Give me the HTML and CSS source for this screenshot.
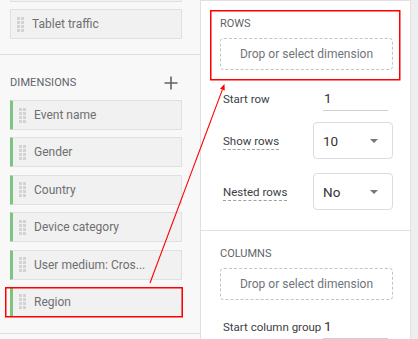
FILE: index.html
```html
<!DOCTYPE html>
<html>
<head>
<meta charset="utf-8">
<link rel="stylesheet" href="styles.css">
</head>
<body>
<div class="app">
  <aside class="left">
    <section class="sec sec-metrics">
      <div class="chip chip-clipped"></div>
      <div class="chip">
        <svg class="handle" width="7" height="15" viewBox="0 0 7 15"><rect x="0" y="0" width="3" height="3"/><rect x="4" y="0" width="3" height="3"/><rect x="0" y="4" width="3" height="3"/><rect x="4" y="4" width="3" height="3"/><rect x="0" y="8" width="3" height="3"/><rect x="4" y="8" width="3" height="3"/><rect x="0" y="12" width="3" height="3"/><rect x="4" y="12" width="3" height="3"/></svg>
        <span class="chip-text">Tablet traffic</span>
      </div>
    </section>
    <section class="sec sec-dims">
      <div class="sec-head">
        <span class="sec-title">Dimensions</span>
        <svg class="plus" width="14" height="14" viewBox="0 0 14 14"><path d="M7 0.5V13.5M0.5 7H13.5"/></svg>
      </div>
      <div class="chip-list">
        <div class="chip dim">
          <svg class="handle" width="7" height="15" viewBox="0 0 7 15"><rect x="0" y="0" width="3" height="3"/><rect x="4" y="0" width="3" height="3"/><rect x="0" y="4" width="3" height="3"/><rect x="4" y="4" width="3" height="3"/><rect x="0" y="8" width="3" height="3"/><rect x="4" y="8" width="3" height="3"/><rect x="0" y="12" width="3" height="3"/><rect x="4" y="12" width="3" height="3"/></svg>
          <span class="chip-text">Event name</span>
        </div>
        <div class="chip dim">
          <svg class="handle" width="7" height="15" viewBox="0 0 7 15"><rect x="0" y="0" width="3" height="3"/><rect x="4" y="0" width="3" height="3"/><rect x="0" y="4" width="3" height="3"/><rect x="4" y="4" width="3" height="3"/><rect x="0" y="8" width="3" height="3"/><rect x="4" y="8" width="3" height="3"/><rect x="0" y="12" width="3" height="3"/><rect x="4" y="12" width="3" height="3"/></svg>
          <span class="chip-text">Gender</span>
        </div>
        <div class="chip dim">
          <svg class="handle" width="7" height="15" viewBox="0 0 7 15"><rect x="0" y="0" width="3" height="3"/><rect x="4" y="0" width="3" height="3"/><rect x="0" y="4" width="3" height="3"/><rect x="4" y="4" width="3" height="3"/><rect x="0" y="8" width="3" height="3"/><rect x="4" y="8" width="3" height="3"/><rect x="0" y="12" width="3" height="3"/><rect x="4" y="12" width="3" height="3"/></svg>
          <span class="chip-text">Country</span>
        </div>
        <div class="chip dim">
          <svg class="handle" width="7" height="15" viewBox="0 0 7 15"><rect x="0" y="0" width="3" height="3"/><rect x="4" y="0" width="3" height="3"/><rect x="0" y="4" width="3" height="3"/><rect x="4" y="4" width="3" height="3"/><rect x="0" y="8" width="3" height="3"/><rect x="4" y="8" width="3" height="3"/><rect x="0" y="12" width="3" height="3"/><rect x="4" y="12" width="3" height="3"/></svg>
          <span class="chip-text">Device category</span>
        </div>
        <div class="chip dim">
          <svg class="handle" width="7" height="15" viewBox="0 0 7 15"><rect x="0" y="0" width="3" height="3"/><rect x="4" y="0" width="3" height="3"/><rect x="0" y="4" width="3" height="3"/><rect x="4" y="4" width="3" height="3"/><rect x="0" y="8" width="3" height="3"/><rect x="4" y="8" width="3" height="3"/><rect x="0" y="12" width="3" height="3"/><rect x="4" y="12" width="3" height="3"/></svg>
          <span class="chip-text">User medium: Cros...</span>
        </div>
        <div class="chip dim">
          <svg class="handle" width="7" height="15" viewBox="0 0 7 15"><rect x="0" y="0" width="3" height="3"/><rect x="4" y="0" width="3" height="3"/><rect x="0" y="4" width="3" height="3"/><rect x="4" y="4" width="3" height="3"/><rect x="0" y="8" width="3" height="3"/><rect x="4" y="8" width="3" height="3"/><rect x="0" y="12" width="3" height="3"/><rect x="4" y="12" width="3" height="3"/></svg>
          <span class="chip-text">Region</span>
        </div>
      </div>
    </section>
  </aside>

  <main class="right">
    <section class="panel panel-rows">
      <div class="panel-title">Rows</div>
      <div class="dropzone">Drop or select dimension</div>
      <div class="form">
        <div class="field">
          <span class="field-label">Start row</span>
          <span class="num-input">1</span>
        </div>
        <div class="field field-select">
          <span class="field-label"><span class="dashed">Show rows</span></span>
          <span class="select"><span class="select-value">10</span><span class="caret"></span></span>
        </div>
        <div class="field field-select">
          <span class="field-label"><span class="dashed">Nested rows</span></span>
          <span class="select"><span class="select-value">No</span><span class="caret"></span></span>
        </div>
      </div>
    </section>
    <section class="panel panel-cols">
      <div class="panel-title">Columns</div>
      <div class="dropzone">Drop or select dimension</div>
      <div class="form">
        <div class="field">
          <span class="field-label">Start column group</span>
          <span class="num-input">1</span>
        </div>
      </div>
    </section>
  </main>

  <div class="scrollbar"></div>

  <svg class="annot" width="418" height="339" viewBox="0 0 418 339">
    <rect x="210.75" y="10.75" width="189" height="69" />
    <rect x="5.75" y="287.75" width="176.5" height="29" />
    <line x1="150" y1="283" x2="222.4" y2="89.6" />
    <polygon points="224.5,84 224.75,90.49 220.07,88.75" />
  </svg>
</div>
</body>
</html>
```

FILE: styles.css
```css
* {
  box-sizing: border-box;
}

body {
  margin: 0;
  font-family: Roboto, "Liberation Sans", Arial, sans-serif;
  background: #ffffff;
}

.app {
  position: relative;
  display: flex;
  width: 418px;
  height: 339px;
  overflow: hidden;
}

/* ---------- left column ---------- */
.left {
  flex: none;
  width: 201px;
  background: #f8f8f8;
  border-right: 1px solid #e0e0e0;
}

.sec {
  padding: 0 18px 15px 10px;
  border-bottom: 1px solid #e0e0e0;
}

.sec-metrics {
  display: flex;
  flex-direction: column;
  gap: 7px;
}

.sec-dims {
  padding-top: 20px;
  padding-bottom: 16px;
}

.sec-head {
  display: flex;
  align-items: center;
  justify-content: space-between;
  height: 16px;
  margin-bottom: 9px;
  padding-right: 4px;
}

.sec-title {
  font-size: 11px;
  line-height: 16px;
  text-transform: uppercase;
  color: #5f6368;
  letter-spacing: 0.1px;
}

.plus path {
  stroke: #5f6368;
  stroke-width: 1.6;
  fill: none;
}

.chip-list {
  display: flex;
  flex-direction: column;
  gap: 7.4px;
}

.chip {
  display: flex;
  align-items: center;
  gap: 8px;
  height: 30px;
  padding-left: 6px;
  background: #f1f1f1;
  border: 1px solid #e0e0e0;
  border-radius: 1px;
}

.chip-clipped {
  height: 2px;
  border-top: none;
}

.chip.dim {
  border-left: 3px solid #7cc47f;
}

.handle {
  flex: none;
  fill: #d3d3d3;
}

.chip-text {
  font-size: 12px;
  color: #6f6f6f;
  white-space: nowrap;
}

/* ---------- right column ---------- */
.right {
  flex: none;
  width: 209px;
  background: #ffffff;
}

.panel {
  padding: 16px 17px 20px 19px;
  border-bottom: 1px solid #e0e0e0;
}

.panel-rows {
  border-top: 1px solid #e0e0e0;
}

.panel-title {
  font-size: 11px;
  line-height: 14px;
  text-transform: uppercase;
  color: #5f6368;
  margin-bottom: 7px;
}

.dropzone {
  display: flex;
  align-items: center;
  justify-content: center;
  height: 32px;
  border: 1px dashed #c4c4c4;
  border-radius: 4px;
  font-size: 12px;
  color: #70757a;
}

.form {
  display: flex;
  flex-direction: column;
  padding-left: 3px;
  margin-top: 16px;
}

.field {
  display: flex;
  align-items: center;
  height: 25px;
}

.field-label {
  flex: none;
  width: 100px;
  font-size: 11.5px;
  color: #3c4043;
  white-space: nowrap;
}

.num-input {
  width: 65px;
  height: 25px;
  padding-left: 1px;
  border-bottom: 1px solid #d0d0d0;
  font-size: 13.5px;
  line-height: 24px;
  color: #333333;
}

.field-select {
  height: 37px;
  justify-content: space-between;
  margin-top: 11px;
}

.field-select + .field-select {
  margin-top: 14px;
}

.field-select .field-label {
  width: auto;
}

.dashed {
  padding-bottom: 1px;
  border-bottom: 1px dashed #9e9e9e;
}

.select {
  display: flex;
  align-items: center;
  justify-content: space-between;
  width: 80px;
  height: 37px;
  padding: 0 14px 0 9px;
  border: 1px solid #dadce0;
  border-radius: 4px;
}

.select-value {
  font-size: 13.5px;
  color: #333333;
}

.caret {
  width: 0;
  height: 0;
  border-left: 4px solid transparent;
  border-right: 4px solid transparent;
  border-top: 4px solid #777777;
}

.panel-cols .form {
  margin-top: 14px;
}

/* ---------- scrollbar ---------- */
.scrollbar {
  flex: none;
  width: 8px;
  background: #eeeeee;
  border-left: 1px solid #e2e2e2;
}

/* ---------- annotation overlay ---------- */
.annot {
  position: absolute;
  top: 0;
  left: 0;
  pointer-events: none;
}

.annot rect,
.annot line {
  fill: none;
  stroke: #ff0000;
}

.annot rect {
  stroke-width: 1.5;
}

.annot line {
  stroke-width: 1.1;
}

.annot polygon {
  fill: #ff0000;
}
```
